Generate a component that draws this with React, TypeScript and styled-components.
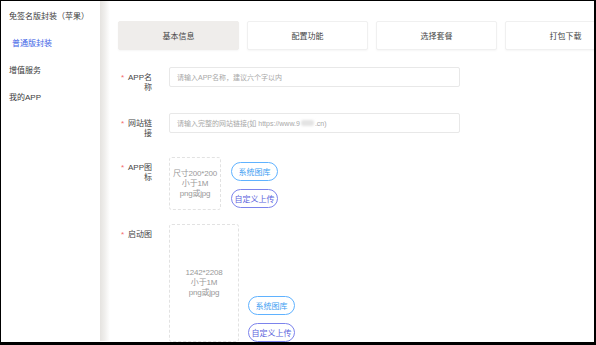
import React from "react";
import styled, { createGlobalStyle } from "styled-components";

const GlobalStyle = createGlobalStyle`
  html, body {
    margin: 0;
    padding: 0;
    background: #fff;
  }
  body {
    font-family: "Liberation Sans", "Noto Sans CJK SC", sans-serif;
  }
`;

const menu = [
  { label: "免签名版封装（苹果）" },
  { label: "普通版封装", active: true, sub: true },
  { label: "增值服务" },
  { label: "我的APP" },
];

const tabs = ["基本信息", "配置功能", "选择套餐", "打包下载"];

const App = () => {
  return (
    <>
      <GlobalStyle />
      <Frame>
        <Sidebar>
          {menu.map((m) => (
            <SideItem key={m.label} $active={m.active} $sub={m.sub}>
              {m.label}
            </SideItem>
          ))}
        </Sidebar>
        <Divider />
        <Main>
          <Tabs>
            {tabs.map((t, i) => (
              <Tab key={t} $active={i === 0}>
                {t}
              </Tab>
            ))}
          </Tabs>
          <Form>
            <Row $gap={20}>
              <Label>
                <Star>*</Star>
                <LabelText>APP名称</LabelText>
              </Label>
              <Field>请输入APP名称，建议六个字以内</Field>
            </Row>
            <Row $gap={18}>
              <Label>
                <Star>*</Star>
                <LabelText>网站链接</LabelText>
              </Label>
              <Field>
                请输入完整的网站链接(如 https://www.9<Blur />.cn)
              </Field>
            </Row>
            <Row $gap={14}>
              <Label>
                <Star>*</Star>
                <LabelText>APP图标</LabelText>
              </Label>
              <ImageBox $w={52} $h={53}>
                <span>尺寸200*200</span>
                <span>小于1M</span>
                <span>png或jpg</span>
              </ImageBox>
              <ButtonCol $bottom={false}>
                <PillButton $color="#5fb2ff" $text="#3c9ef2">
                  系统图库
                </PillButton>
                <PillButton $color="#7c83ec" $text="#5a61dc">
                  自定义上传
                </PillButton>
              </ButtonCol>
            </Row>
            <Row $gap={0}>
              <Label>
                <Star>*</Star>
                <LabelText>启动图</LabelText>
              </Label>
              <ImageBox $w={70} $h={118}>
                <span>1242*2208</span>
                <span>小于1M</span>
                <span>png或jpg</span>
              </ImageBox>
              <ButtonCol $bottom>
                <PillButton $color="#5fb2ff" $text="#3c9ef2">
                  系统图库
                </PillButton>
                <PillButton $color="#7c83ec" $text="#5a61dc">
                  自定义上传
                </PillButton>
              </ButtonCol>
            </Row>
          </Form>
        </Main>
      </Frame>
    </>
  );
};

export default App;

const Frame = styled.div`
  width: 596px;
  height: 345px;
  box-sizing: border-box;
  border-style: solid;
  border-color: #000;
  border-width: 1px 2px 3px 1px;
  display: flex;
  overflow: hidden;
  background: #fff;
`;

const Sidebar = styled.div`
  width: 99px;
  flex-shrink: 0;
  padding-top: 2px;
  box-sizing: border-box;
`;

const SideItem = styled.div<{ $active?: boolean; $sub?: boolean }>`
  height: 27px;
  line-height: 27px;
  padding-left: ${(p) => (p.$sub ? 11 : 8)}px;
  font-size: 8px;
  color: ${(p) => (p.$active ? "#3d5fe6" : "#3a3a3a")};
  white-space: nowrap;
`;

const Divider = styled.div`
  width: 10px;
  flex-shrink: 0;
  margin-bottom: 1px;
  background: linear-gradient(to right, #e5e3e0 0%, #efeeec 45%, #fff 100%);
`;

const Main = styled.div`
  flex: 1;
  min-width: 0;
  overflow: hidden;
  padding: 20px 0 0 8px;
`;

const Tabs = styled.div`
  display: flex;
  gap: 8px;
`;

const Tab = styled.div<{ $active?: boolean }>`
  flex: 0 0 121px;
  height: 29px;
  box-sizing: border-box;
  border: 1px solid ${(p) => (p.$active ? "#efedeb" : "#f0f0f0")};
  border-radius: 2px;
  box-shadow: 0 1px 2px rgba(0, 0, 0, 0.04);
  background: ${(p) => (p.$active ? "#efedeb" : "#fff")};
  display: flex;
  align-items: center;
  justify-content: center;
  font-size: 8px;
  color: #444;
`;

const Form = styled.div`
  margin-top: 17px;
  padding-left: 3px;
`;

const Row = styled.div<{ $gap: number }>`
  display: flex;
  align-items: flex-start;
  margin-bottom: ${(p) => p.$gap}px;
`;

const Label = styled.div`
  display: flex;
  width: 31px;
  flex-shrink: 0;
  margin-right: 17px;
  padding-top: 6px;
  font-size: 8px;
  line-height: 10px;
  color: #444;
`;

const Star = styled.span`
  width: 6px;
  color: #f56c6c;
`;

const LabelText = styled.span`
  width: 25px;
  text-align: right;
`;

const Field = styled.div`
  width: 291px;
  height: 20px;
  box-sizing: border-box;
  border: 1px solid #e8e8e8;
  border-radius: 2px;
  padding: 0 7px;
  display: flex;
  align-items: center;
  font-size: 7px;
  color: #a8a8a8;
  white-space: nowrap;
`;

const Blur = styled.span`
  display: inline-block;
  width: 13px;
  height: 6px;
  margin: 0 1px;
  background: #e4e4e4;
  border-radius: 2px;
  filter: blur(1px);
`;

const ImageBox = styled.div<{ $w: number; $h: number }>`
  width: ${(p) => p.$w}px;
  height: ${(p) => p.$h}px;
  flex-shrink: 0;
  box-sizing: border-box;
  border: 1px dashed #e2e2e2;
  border-radius: 3px;
  display: flex;
  flex-direction: column;
  align-items: center;
  justify-content: center;
  font-size: 8px;
  letter-spacing: -0.2px;
  line-height: 10px;
  color: #999;
  text-align: center;
  white-space: nowrap;
`;

const ButtonCol = styled.div<{ $bottom: boolean }>`
  display: flex;
  flex-direction: column;
  gap: 8px;
  margin-left: ${(p) => (p.$bottom ? 9 : 10)}px;
  margin-top: ${(p) => (p.$bottom ? 0 : 5)}px;
  align-self: ${(p) => (p.$bottom ? "flex-end" : "flex-start")};
`;

const PillButton = styled.button<{ $color: string; $text: string }>`
  width: 47px;
  height: 19px;
  box-sizing: border-box;
  padding: 0;
  border: 1px solid ${(p) => p.$color};
  border-radius: 10px;
  background: #fff;
  color: ${(p) => p.$text};
  font-family: inherit;
  font-size: 8px;
  white-space: nowrap;
`;
